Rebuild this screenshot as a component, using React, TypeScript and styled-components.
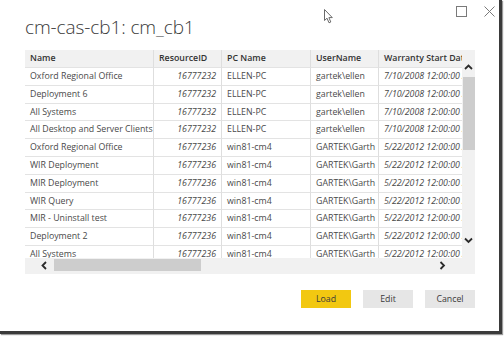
import React from "react";
import styled, { createGlobalStyle } from "styled-components";

const Global = createGlobalStyle`
  html, body { margin: 0; padding: 0; background: #ffffff; }
  body { font-family: "Open Sans", "Noto Sans", "Liberation Sans", sans-serif; }
  * { box-sizing: border-box; }
`;

const Screen = styled.div`
  width: 504px;
  height: 337px;
  overflow: hidden;
  background: #ffffff;
`;

const Window = styled.div`
  position: relative;
  width: 502px;
  height: 334px;
  background: #ffffff;
  border-right: 3px solid #3a3a3a;
  border-bottom: 3px solid #3a3a3a;
  box-shadow: 1px 1px 1px #9a9a9a;
  display: flex;
  flex-direction: column;
  padding: 0 25px 0 25px;
`;

const TopBar = styled.div`
  display: flex;
  justify-content: flex-end;
  align-items: flex-start;
  gap: 17px;
  height: 12px;
  margin-top: 6px;
  margin-right: -21px;
`;

const Title = styled.h1`
  margin: 0;
  font-family: "Open Sans", "Noto Sans", sans-serif;
  font-weight: 300;
  font-size: 19px;
  line-height: 19px;
  color: #3a3a3a;
  letter-spacing: -0.1px;
  height: 32px;
`;

const TableBox = styled.div`
  width: 450px;
  background: #f1f1f1;
  display: flex;
  flex-direction: column;
  padding-bottom: 2px;
`;

const TableTop = styled.div`
  display: flex;
  height: 208px;
`;

const Grid = styled.div`
  width: 437px;
  height: 208px;
  overflow: hidden;
`;

const Row = styled.div<{ $head?: boolean }>`
  display: grid;
  grid-template-columns: 129px 68px 89px 68px 83px;
  height: ${(p) => (p.$head ? "18px" : "17.8px")};
  background: ${(p) => (p.$head ? "#f1f1f1" : "#ffffff")};
`;

const Cell = styled.div<{ $head?: boolean; $num?: boolean; $italic?: boolean }>`
  font-size: 8.8px;
  line-height: 17px;
  padding: 0 5px;
  white-space: nowrap;
  overflow: hidden;
  color: ${(p) => (p.$head ? "#333333" : "#4a4a4a")};
  font-weight: ${(p) => (p.$head ? 600 : 400)};
  font-style: ${(p) => (p.$italic ? "italic" : "normal")};
  text-align: ${(p) => (p.$num ? "right" : "left")};
  border-right: 1px solid #dedede;
  border-bottom: 1px solid #e3e3e3;
  &:last-child { border-right: none; padding-right: 0; }
`;

const VScroll = styled.div`
  width: 13px;
  display: flex;
  flex-direction: column;
  align-items: center;
`;

const Arrow = styled.div<{ $w?: number; $h?: number }>`
  width: ${(p) => p.$w ?? 11}px;
  height: ${(p) => p.$h ?? 10}px;
  display: flex;
  align-items: center;
  justify-content: center;
  flex-shrink: 0;
`;

const VThumb = styled.div`
  width: 12px;
  height: 73px;
  background: #cdcdcd;
  margin-top: 5px;
`;

const Spacer = styled.div`
  flex: 1;
`;

const HScroll = styled.div`
  height: 14px;
  display: flex;
  align-items: center;
  padding-left: 14px;
`;

const HThumb = styled.div`
  width: 147px;
  height: 12px;
  background: #cdcdcd;
  margin-left: 5px;
`;

const Footer = styled.div`
  display: flex;
  justify-content: flex-end;
  gap: 12px;
  margin-top: 16px;
  width: 450px;
`;

const Button = styled.button<{ $primary?: boolean }>`
  width: 50px;
  height: 18px;
  border: none;
  padding: 0;
  font-family: "Open Sans", "Noto Sans", sans-serif;
  font-size: 8.8px;
  color: #3a3a3a;
  background: ${(p) => (p.$primary ? "#f2c811" : "#e6e6e6")};
`;

const Cursor = styled.svg`
  position: absolute;
  left: 324px;
  top: 9px;
`;

const Chev = ({ dir }: { dir: "up" | "down" | "left" | "right" }) => {
  const pts: Record<string, string> = {
    up: "1,5 4.5,1.5 8,5",
    down: "1,1.5 4.5,5 8,1.5",
    left: "5,1 1.5,4.5 5,8",
    right: "1.5,1 5,4.5 1.5,8",
  };
  const vert = dir === "up" || dir === "down";
  return (
    <svg width={vert ? 9 : 7} height={vert ? 7 : 9} viewBox={vert ? "0 0 9 7" : "0 0 7 9"}>
      <polyline points={pts[dir]} fill="none" stroke="#2b2b2b" strokeWidth="1.8" />
    </svg>
  );
};

type R = [string, string, string, string, string];
const a: R = ["", "16777232", "ELLEN-PC", "gartek\\ellen", "7/10/2008 12:00:00 AM"];
const b: R = ["", "16777236", "win81-cm4", "GARTEK\\Garth", "5/22/2012 12:00:00 AM"];
const names = [
  "Oxford Regional Office",
  "Deployment 6",
  "All Systems",
  "All Desktop and Server Clients",
  "Oxford Regional Office",
  "WIR Deployment",
  "MIR Deployment",
  "WIR Query",
  "MIR - Uninstall test",
  "Deployment 2",
  "All Systems",
];
const rows: R[] = names.map((n, i) => {
  const base = i < 4 ? a : b;
  return [n, base[1], base[2], base[3], base[4]];
});

export default function App() {
  return (
    <Screen>
      <Global />
      <Window>
        <Cursor width="10" height="15" viewBox="0 0 10 15">
          <path d="M0.5,0.5 L0.5,11.5 L3,9.2 L5,13.8 L6.8,13 L4.9,8.6 L8.3,8.6 Z" fill="#ffffff" stroke="#6a6a6a" strokeWidth="1" />
        </Cursor>
        <TopBar>
          <svg width="11" height="11" viewBox="0 0 11 11">
            <rect x="0.5" y="0.5" width="10" height="10" fill="none" stroke="#7a7a7a" strokeWidth="1" />
          </svg>
          <svg width="11" height="11" viewBox="0 0 11 11">
            <path d="M0.5,0.5 L10.5,10.5 M10.5,0.5 L0.5,10.5" stroke="#7a7a7a" strokeWidth="1" />
          </svg>
        </TopBar>
        <Title>cm-cas-cb1: cm_cb1</Title>
        <TableBox>
          <TableTop>
            <Grid>
              <Row $head>
                <Cell $head>Name</Cell>
                <Cell $head>ResourceID</Cell>
                <Cell $head>PC Name</Cell>
                <Cell $head>UserName</Cell>
                <Cell $head>Warranty Start Date</Cell>
              </Row>
              {rows.map((r, i) => (
                <Row key={i}>
                  <Cell>{r[0]}</Cell>
                  <Cell $num $italic>{r[1]}</Cell>
                  <Cell>{r[2]}</Cell>
                  <Cell>{r[3]}</Cell>
                  <Cell $italic>{r[4]}</Cell>
                </Row>
              ))}
            </Grid>
            <VScroll>
              <Arrow $h={10} style={{ marginTop: 12 }}>
                <Chev dir="up" />
              </Arrow>
              <VThumb />
              <Spacer />
              <Arrow $h={10} style={{ marginBottom: 13 }}>
                <Chev dir="down" />
              </Arrow>
            </VScroll>
          </TableTop>
          <HScroll>
            <Arrow $w={10} $h={12}>
              <Chev dir="left" />
            </Arrow>
            <HThumb />
            <Spacer />
            <Arrow $w={10} $h={12} style={{ marginRight: 28 }}>
              <Chev dir="right" />
            </Arrow>
          </HScroll>
        </TableBox>
        <Footer>
          <Button $primary>Load</Button>
          <Button>Edit</Button>
          <Button>Cancel</Button>
        </Footer>
      </Window>
    </Screen>
  );
}
